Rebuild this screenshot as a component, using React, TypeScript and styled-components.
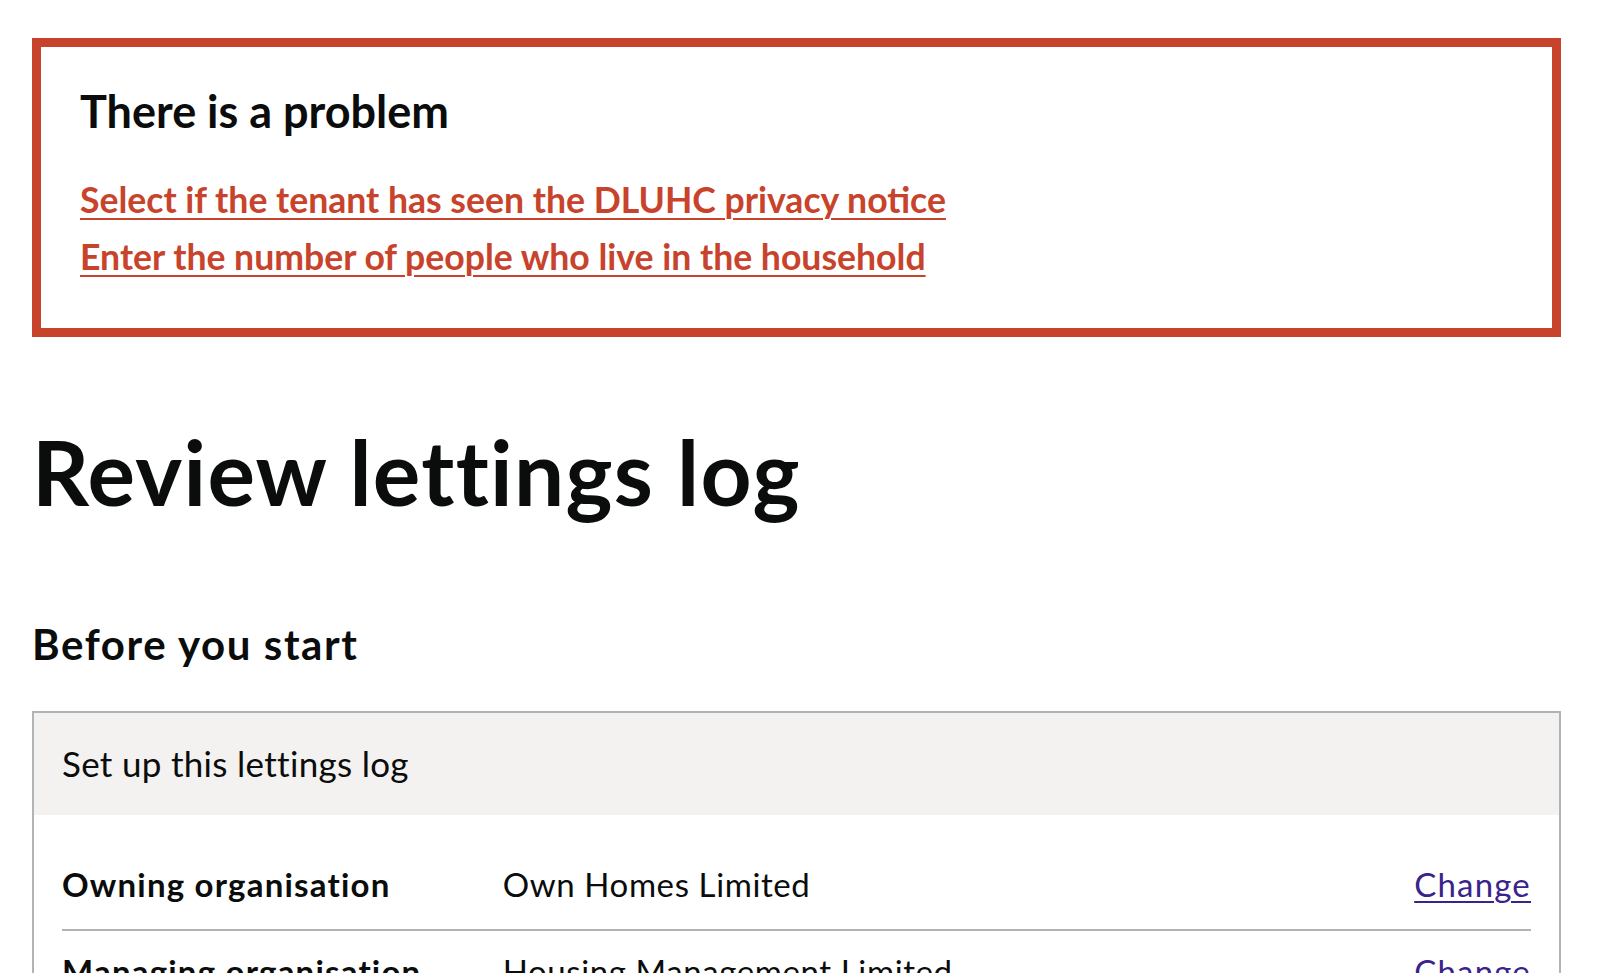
import React from "react";
import styled, { createGlobalStyle } from "styled-components";

const GlobalStyle = createGlobalStyle`
  html, body {
    margin: 0;
    padding: 0;
    background: #ffffff;
  }
  body {
    font-family: Lato, "Noto Sans", Arial, sans-serif;
    color: #0b0c0c;
  }
`;

const Page = styled.main`
  padding: 38px 39px 0 32px;
  display: flex;
  flex-direction: column;
`;

const ErrorSummary = styled.div`
  border: 9px solid #c8432b;
  padding: 37px 40px 50px 39px;
  display: flex;
  flex-direction: column;
`;

const ErrorTitle = styled.h2`
  margin: 0 0 41px;
  font-size: 45px;
  line-height: 1.2;
  font-weight: 700;
`;

const ErrorList = styled.ul`
  list-style: none;
  margin: 0;
  padding: 0;
  display: flex;
  flex-direction: column;
  gap: 14px;
`;

const ErrorLink = styled.a`
  font-size: 35.6px;
  line-height: 1.2;
  font-weight: 700;
  color: #c8432b;
  text-decoration: underline;
  text-decoration-thickness: 2px;
  text-underline-offset: 5px;
`;

const Title = styled.h1`
  margin: 82px 0 0;
  font-size: 89px;
  line-height: 1.2;
  font-weight: 700;
  letter-spacing: 1.3px;
`;

const SectionTitle = styled.h2`
  margin: 93px 0 0;
  font-size: 42px;
  line-height: 1.2;
  font-weight: 700;
  letter-spacing: 1.6px;
`;

const Card = styled.section`
  margin-top: 41px;
  border: 2px solid #b1b4b6;
`;

const CardHeader = styled.div`
  background: #f3f2f1;
  padding: 29px 28px 31px;
  font-size: 35px;
  line-height: 1.2;
  font-weight: 400;
  letter-spacing: 0.3px;
`;

const CardBody = styled.dl`
  margin: 0;
  padding: 29px 28px 0;
`;

const Row = styled.div<{ $last?: boolean }>`
  display: grid;
  grid-template-columns: 30% 50% 20%;
  padding: 21px 0 25px;
  border-bottom: ${(p) => (p.$last ? "none" : "2px solid #b1b4b6")};
  font-size: 33px;
  line-height: 1.2;
`;

const Key = styled.dt`
  font-weight: 700;
  margin: 0;
  padding-right: 20px;
  letter-spacing: 1.2px;
`;

const Value = styled.dd`
  margin: 0;
  font-weight: 400;
  letter-spacing: 0.6px;
`;

const Action = styled.dd`
  margin: 0;
  text-align: right;
`;

const ChangeLink = styled.a`
  color: #3a238c;
  letter-spacing: 1.2px;
  text-decoration: underline;
  text-decoration-thickness: 2px;
  text-underline-offset: 4px;
`;

const rows = [
  { key: "Owning organisation", value: "Own Homes Limited" },
  { key: "Managing organisation", value: "Housing Management Limited" },
];

export default function App() {
  return (
    <>
      <GlobalStyle />
      <Page>
        <ErrorSummary role="alert">
          <ErrorTitle>There is a problem</ErrorTitle>
          <ErrorList>
            <li>
              <ErrorLink href="#privacy">
                Select if the tenant has seen the DLUHC privacy notice
              </ErrorLink>
            </li>
            <li>
              <ErrorLink href="#hhmemb">
                Enter the number of people who live in the household
              </ErrorLink>
            </li>
          </ErrorList>
        </ErrorSummary>
        <Title>Review lettings log</Title>
        <SectionTitle>Before you start</SectionTitle>
        <Card>
          <CardHeader>Set up this lettings log</CardHeader>
          <CardBody>
            {rows.map((r, i) => (
              <Row key={r.key} $last={i === rows.length - 1}>
                <Key>{r.key}</Key>
                <Value>{r.value}</Value>
                <Action>
                  <ChangeLink href="#">Change</ChangeLink>
                </Action>
              </Row>
            ))}
          </CardBody>
        </Card>
      </Page>
    </>
  );
}
